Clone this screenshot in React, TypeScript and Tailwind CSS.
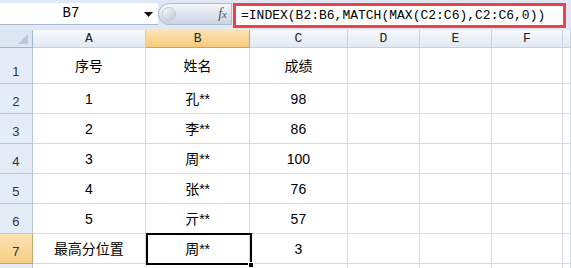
import React from "react";

const cols = [
  { name: "A", w: 114 },
  { name: "B", w: 105 },
  { name: "C", w: 98 },
  { name: "D", w: 73 },
  { name: "E", w: 72 },
  { name: "F", w: 72 },
  { name: "", w: 8 },
];

const rows: { n: number; h: number; cells: string[] }[] = [
  { n: 1, h: 36, cells: ["序号", "姓名", "成绩"] },
  { n: 2, h: 30, cells: ["1", "孔**", "98"] },
  { n: 3, h: 30, cells: ["2", "李**", "86"] },
  { n: 4, h: 30, cells: ["3", "周**", "100"] },
  { n: 5, h: 30, cells: ["4", "张**", "76"] },
  { n: 6, h: 30, cells: ["5", "亓**", "57"] },
  { n: 7, h: 30, cells: ["最高分位置", "周**", "3"] },
  { n: 8, h: 30, cells: [] },
];

const cellFont = { fontFamily: '"Liberation Sans", "Noto Sans CJK SC", sans-serif' };

export default function App() {
  return (
    <div className="w-[571px] h-[268px] overflow-hidden bg-white relative">
      {/* formula bar */}
      <div className="h-[30px] bg-[#dfe8f4] flex items-start pt-[3px]">
        <div className="w-[158px] h-[22px] bg-white border-b border-[#a9b8cb] flex items-center relative">
          <span
            className="w-[142px] text-center text-[14px] text-black"
            style={{ fontFamily: '"Liberation Mono", monospace' }}
          >
            B7
          </span>
          <svg width="9" height="6" viewBox="0 0 9 6" className="absolute left-[144px] top-[9px]">
            <polygon points="0,0 9,0 4.5,5" fill="#111" />
          </svg>
        </div>
        <div className="w-[74px] h-[22px] rounded-l-full bg-gradient-to-b from-[#f4f7fb] via-[#dfe6f0] to-[#c9d4e2] border border-[#aebccd] flex items-center justify-end pr-[4px] relative">
          <div className="absolute left-[3px] top-[3px] w-[14px] h-[14px] rounded-full bg-gradient-to-br from-[#ffffff] to-[#b8c4d3] border border-[#c2ccd8]" />
          <span
            className="italic text-[14px] text-[#555] leading-none"
            style={{ fontFamily: '"Liberation Serif", serif' }}
          >
            f<span className="text-[11px]">x</span>
          </span>
        </div>
        <div className="ml-[1px] w-[333px] h-[25px] bg-white border-[3px] border-[#ea4449] flex items-center pl-[5px]">
          <span
            className="text-[13px] text-black whitespace-nowrap"
            style={{ fontFamily: '"Liberation Mono", monospace' }}
          >
            =INDEX(B2:B6,MATCH(MAX(C2:C6),C2:C6,0))
          </span>
        </div>
      </div>

      {/* column headers */}
      <div className="flex h-[18px]">
        <div className="w-[33px] h-full bg-[#dce6f3] border-r border-b border-[#9eb6ce] relative">
          <svg width="10" height="10" viewBox="0 0 10 10" className="absolute right-[4px] bottom-[3px]">
            <polygon points="10,0 10,10 0,10" fill="#b7c8dc" />
          </svg>
        </div>
        {cols.map((c, i) => (
          <div
            key={i}
            className={
              "h-full flex items-center justify-center border-r border-b text-[13px] text-[#222] " +
              (c.name === "B"
                ? "bg-gradient-to-b from-[#fbe4b5] to-[#f7c97a] border-[#c8a468]"
                : "bg-gradient-to-b from-[#f6f9fc] to-[#e2e9f3] border-[#c5d2e1]")
            }
            style={{ width: c.w, fontFamily: '"Liberation Mono", monospace' }}
          >
            {c.name}
          </div>
        ))}
      </div>

      {/* rows */}
      {rows.map((r) => (
        <div key={r.n} className="flex" style={{ height: r.h }}>
          <div
            className={
              "w-[33px] h-full flex items-end justify-center pb-[2px] border-r border-b text-[13px] text-[#333] " +
              (r.n === 7
                ? "bg-gradient-to-b from-[#fbe3b3] to-[#f8cd84] border-[#c8a468]"
                : "bg-[#e4ecf7] border-[#b5c6da]")
            }
            style={cellFont}
          >
            {r.n < 8 ? r.n : ""}
          </div>
          {cols.map((c, i) => (
            <div
              key={i}
              className="h-full flex items-center justify-center pt-[2px] border-r border-b border-[#d6dae3] text-[14px] text-black"
              style={{ width: c.w, ...cellFont }}
            >
              {r.cells[i] ?? ""}
            </div>
          ))}
        </div>
      ))}

      {/* selected cell B7 */}
      <div className="absolute left-[146px] top-[233px] w-[106px] h-[32px] border-2 border-black pointer-events-none" />
      <div className="absolute left-[248px] top-[262px] w-[6px] h-[6px] bg-black border border-white" />
    </div>
  );
}
